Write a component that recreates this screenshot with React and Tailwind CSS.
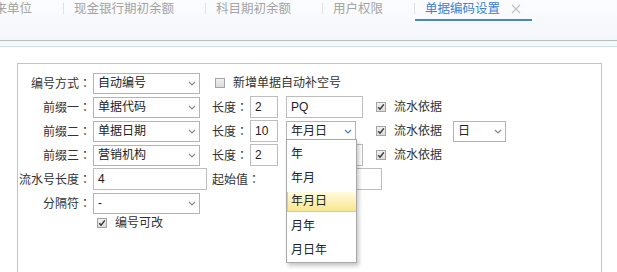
import React from "react";

const FONT = { fontFamily: '"Liberation Sans", "Noto Sans CJK SC", sans-serif' };

function Colon() {
  return <span className="inline-block w-[12px] font-['Noto_Sans_CJK_JP',sans-serif]">：</span>;
}

function Chevron({ blue }) {
  return (
    <svg width="8" height="5" viewBox="0 0 8 5" className="shrink-0">
      <polyline points="1,1 4,4 7,1" fill="none" stroke={blue ? "#4a7fc8" : "#8a8a8a"} strokeWidth="1.2" />
    </svg>
  );
}

function Select({ w, value, blue, children }) {
  return (
    <div className={`relative h-[21px] shrink-0 ${w}`}>
      <div className="h-full w-full border border-[#b4b4b4] bg-white flex items-center justify-between pl-[4px] pr-[3px]">
        <span className="text-[#222] leading-none">{value}</span>
        <Chevron blue={blue} />
      </div>
      {children}
    </div>
  );
}

function Input({ w, value, ml }) {
  return (
    <div className={`h-[22px] shrink-0 border border-[#bdbdbd] bg-white flex items-center pl-[4px] text-[#222] ${w} ${ml || ""}`}>
      {value}
    </div>
  );
}

function Check({ checked, ml }) {
  return (
    <div className={`w-[10px] h-[10px] shrink-0 border border-[#a4a4a4] bg-gradient-to-b from-[#f0f0f0] to-[#dcdcdc] flex items-center justify-center ${ml || ""}`}>
      {checked && (
        <svg width="8" height="8" viewBox="0 0 8 8">
          <polyline points="1.2,4.2 3.1,6.2 6.8,1.4" fill="none" stroke="#333" strokeWidth="1.4" />
        </svg>
      )}
    </div>
  );
}

function Label({ children }) {
  return (
    <div className="w-[73px] shrink-0 text-right text-[#333] mr-[2px] whitespace-nowrap">
      {children}
      <Colon />
    </div>
  );
}

function Text({ children, cls }) {
  return <span className={`shrink-0 whitespace-nowrap text-[#333] ${cls || ""}`}>{children}</span>;
}

function Tab({ text, first }) {
  return (
    <>
      {!first && <div className="w-px h-[11px] mt-[3px] bg-[#e2e2e2] shrink-0" />}
      <div className="pl-[10px] pr-[31px] h-[21px] pt-[1px] leading-[16px] text-[#a4a4a4] whitespace-nowrap shrink-0">
        {text}
      </div>
    </>
  );
}

export default function App() {
  const items = ["年", "年月", "年月日", "月年", "月日年"];
  return (
    <div className="w-[617px] h-[272px] overflow-hidden bg-white text-[12px]" style={FONT}>
      {/* Tab bar */}
      <div className="h-[41px] border-b border-[#bdbdbd] bg-gradient-to-b from-[#fbfcfe] to-[#f3f7fb] overflow-hidden">
        <div className="flex items-start ml-[-28px] text-[12.5px]">
          <Tab text="往来单位" first />
          <Tab text="现金银行期初余额" />
          <Tab text="科目期初余额" />
          <Tab text="用户权限" />
          <div className="w-px h-[11px] mt-[3px] bg-[#e2e2e2] shrink-0" />
          <div className="pl-[10px] pr-[11px] h-[21px] pt-[1px] leading-[16px] border-b-2 border-[#4d86b6] flex items-start whitespace-nowrap shrink-0">
            <span className="text-[#3f80d4]">单据编码设置</span>
            <svg width="10" height="10" viewBox="0 0 10 10" className="ml-[11px] mt-[3px]">
              <path d="M1 1 L9 9 M9 1 L1 9" stroke="#c2c2c2" strokeWidth="1.2" />
            </svg>
          </div>
        </div>
      </div>
      <div className="h-[6px] bg-[#f6f9fc] border-b border-[#cfdfee]" />

      {/* Panel */}
      <div className="ml-[17px] mt-[16px] w-[585px] h-[230px] border border-[#c4c4c4] pt-[8px] flex flex-col gap-[2px]">
        {/* Row 1 */}
        <div className="flex items-center h-[22px]">
          <Label>编号方式</Label>
          <Select w="w-[107px]" value="自动编号" />
          <Check ml="ml-[15px]" />
          <Text cls="ml-[8px]">新增单据自动补空号</Text>
        </div>
        {/* Row 2 */}
        <div className="flex items-center h-[22px]">
          <Label>前缀一</Label>
          <Select w="w-[107px]" value="单据代码" />
          <Text cls="ml-[12px] w-[36px]">长度<Colon /></Text>
          <Input w="w-[28px]" ml="ml-[2px]" value="2" />
          <Input w="w-[77px]" ml="ml-[8px]" value="PQ" />
          <Check checked ml="ml-[13px]" />
          <Text cls="ml-[8px]">流水依据</Text>
        </div>
        {/* Row 3 */}
        <div className="flex items-center h-[22px] relative z-10">
          <Label>前缀二</Label>
          <Select w="w-[107px]" value="单据日期" />
          <Text cls="ml-[12px] w-[36px]">长度<Colon /></Text>
          <Input w="w-[28px]" ml="ml-[2px]" value="10" />
          <div className="ml-[8px]">
            <Select w="w-[70px]" value="年月日" blue>
              <div className="absolute left-0 top-[18px] w-[71px] border border-[#a8a8a8] bg-white pt-[2px] shadow-[2px_3px_4px_rgba(0,0,0,0.22)]">
                {items.map((t) =>
                  t === "年月日" ? (
                    <div key={t} className="h-[24px] py-[2px]">
                      <div className="h-full flex items-center pl-[3px] text-[#222] bg-gradient-to-b from-[#fffbe0] to-[#f8e78c] border-l border-b border-[#d2ccaa]">
                        {t}
                      </div>
                    </div>
                  ) : (
                    <div key={t} className="h-[24px] flex items-center pl-[4px] text-[#222]">
                      {t}
                    </div>
                  )
                )}
              </div>
            </Select>
          </div>
          <Check checked ml="ml-[20px]" />
          <Text cls="ml-[8px]">流水依据</Text>
          <div className="ml-[11px]">
            <Select w="w-[53px]" value="日" />
          </div>
        </div>
        {/* Row 4 */}
        <div className="flex items-center h-[22px]">
          <Label>前缀三</Label>
          <Select w="w-[107px]" value="营销机构" />
          <Text cls="ml-[12px] w-[36px]">长度<Colon /></Text>
          <Input w="w-[28px]" ml="ml-[2px]" value="2" />
          <Input w="w-[77px]" ml="ml-[8px]" value="" />
          <Check checked ml="ml-[13px]" />
          <Text cls="ml-[8px]">流水依据</Text>
        </div>
        {/* Row 5 */}
        <div className="flex items-center h-[22px]">
          <Label>流水号长度</Label>
          <Input w="w-[114px]" value="4" />
          <Text cls="ml-[5px] w-[48px]">起始值<Colon /></Text>
          <Input w="w-[96px]" ml="ml-[26px]" value="" />
        </div>
        {/* Row 6 */}
        <div className="flex items-center h-[22px]">
          <Label>分隔符</Label>
          <Select w="w-[107px]" value="-" />
        </div>
        {/* Row 7 */}
        <div className="flex items-center h-[14px]">
          <Check checked ml="ml-[79px]" />
          <Text cls="ml-[8px]">编号可改</Text>
        </div>
      </div>
    </div>
  );
}
